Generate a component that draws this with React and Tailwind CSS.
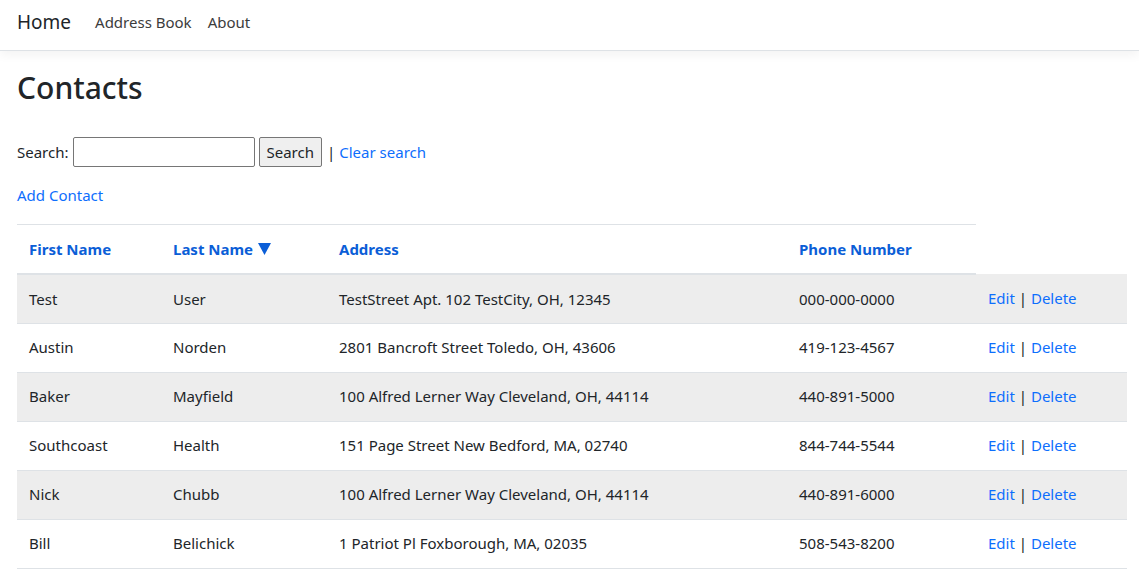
const contacts = [
  { first: "Test", last: "User", address: "TestStreet Apt. 102 TestCity, OH, 12345", phone: "000-000-0000" },
  { first: "Austin", last: "Norden", address: "2801 Bancroft Street Toledo, OH, 43606", phone: "419-123-4567" },
  { first: "Baker", last: "Mayfield", address: "100 Alfred Lerner Way Cleveland, OH, 44114", phone: "440-891-5000" },
  { first: "Southcoast", last: "Health", address: "151 Page Street New Bedford, MA, 02740", phone: "844-744-5544" },
  { first: "Nick", last: "Chubb", address: "100 Alfred Lerner Way Cleveland, OH, 44114", phone: "440-891-6000" },
  { first: "Bill", last: "Belichick", address: "1 Patriot Pl Foxborough, MA, 02035", phone: "508-543-8200" },
];

const App = () => {
  return (
    <div className="min-h-screen bg-white text-[#212529] text-[15px]" style={{ fontFamily: '"Segoe UI", "Noto Sans", sans-serif' }}>
      {/* Navbar */}
      <nav className="h-[51px] border-b border-[#dee2e6] shadow-[0_4px_10px_rgba(0,0,0,0.05)] flex items-center px-[17px] pb-[5px]">
        <a className="text-[19px] text-[#212529] mr-[24px]">Home</a>
        <a className="text-[15px] text-[#3c3c3c] mr-[16px]">Address Book</a>
        <a className="text-[15px] text-[#3c3c3c]">About</a>
      </nav>

      <main className="px-[17px]">
        <h1 className="text-[30px] font-medium leading-[1.2] mt-[19px] mb-[31px]">Contacts</h1>

        {/* Search */}
        <div className="flex items-center h-[30px]">
          <span className="mr-[4px]">Search:</span>
          <input className="w-[182px] h-[30px] border border-[#767676] rounded-[2px] px-1" />
          <button className="ml-[4px] h-[30px] px-[7px] bg-[#efefef] border border-[#767676] rounded-[2px] text-[15px]">Search</button>
          <span className="ml-[5px] mr-[4px]">|</span>
          <a className="text-[#0d6efd]">Clear search</a>
        </div>

        <div className="mt-[17px] mb-[17px]">
          <a className="text-[#0d6efd]">Add Contact</a>
        </div>

        {/* Table */}
        <table className="w-[1110px] border-collapse table-fixed">
          <colgroup>
            <col className="w-[144px]" />
            <col className="w-[166px]" />
            <col className="w-[460px]" />
            <col className="w-[189px]" />
            <col className="w-[151px]" />
          </colgroup>
          <thead>
            <tr className="text-left">
              {[
                ["First Name", false],
                ["Last Name", true],
                ["Address", false],
                ["Phone Number", false],
              ].map(([label, sorted]) => (
                <th key={label} className="px-3 h-[50px] border-t border-b-2 border-[#dee2e6] text-[#0b5ed7] font-bold text-[15px]">
                  <span className="inline-flex items-center">
                    {label}
                    {sorted && (
                      <svg className="ml-[5px]" width="13" height="12" viewBox="0 0 13 12">
                        <path d="M0 0 H13 L6.5 12 Z" fill="#0b5ed7" />
                      </svg>
                    )}
                  </span>
                </th>
              ))}
              <th></th>
            </tr>
          </thead>
          <tbody>
            {contacts.map((c, i) => (
              <tr key={i} className={`border-b border-[#dee2e6] ${i % 2 === 0 ? "bg-[#ededed]" : "bg-white"}`}>
                <td className="px-3 h-[49px]">{c.first}</td>
                <td className="px-3">{c.last}</td>
                <td className="px-3">{c.address}</td>
                <td className="px-3">{c.phone}</td>
                <td className="px-3">
                  <a className="text-[#0d6efd]">Edit</a> | <a className="text-[#0d6efd]">Delete</a>
                </td>
              </tr>
            ))}
          </tbody>
        </table>
      </main>
    </div>
  );
};

export default App;
